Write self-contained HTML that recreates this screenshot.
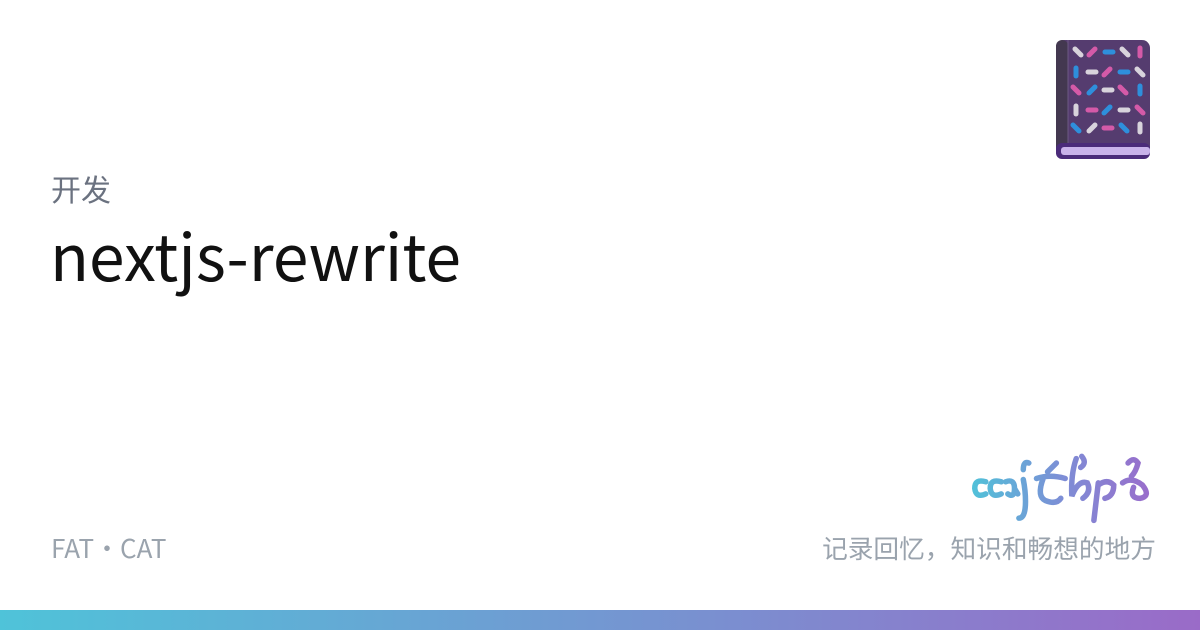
<!DOCTYPE html>
<html><head><meta charset="utf-8"><style>
body{margin:0;width:1200px;height:630px;background:#fff;position:relative;overflow:hidden;font-family:"Noto Sans CJK SC","Liberation Sans",sans-serif}
div{line-height:1}
.cat{position:absolute;left:51px;top:173px;font-size:30px;color:#6b7280}
.title{position:absolute;left:50px;top:222px;font-size:64px;color:#111}
.ft{position:absolute;left:51px;top:535px;font-size:26px;color:#9aa3ad}
.sl{position:absolute;right:44px;top:535px;font-size:25.7px;color:#9aa3ad}
.bar{position:absolute;left:0;top:610px;width:1200px;height:20px;background:linear-gradient(90deg,#4fc3d9,#7a8fd0 60%,#9a6bc8)}
</style></head><body>
<svg style="position:absolute;left:1056px;top:40px" width="94" height="120" viewBox="0 0 94 120">
<rect x="0" y="0" width="94" height="118" rx="8" fill="#553c6f"/>
<rect x="0" y="0" width="12" height="118" rx="6" fill="#433850"/>
<line x1="12" y1="0" x2="12" y2="104" stroke="#6d5a84" stroke-width="1"/>
<rect x="0" y="103" width="94" height="16" rx="6" fill="#4b2b7a"/>
<rect x="5" y="107" width="89" height="8" rx="3" fill="#c9b2ea"/>
<g stroke-width="5" stroke-linecap="round">
<line x1="19" y1="9" x2="25" y2="15" stroke="#d8d3dc"/><line x1="33" y1="15" x2="39" y2="9" stroke="#d45aa8"/><line x1="49" y1="12" x2="57" y2="12" stroke="#2e8fdc"/><line x1="66" y1="9" x2="72" y2="15" stroke="#d8d3dc"/><line x1="84" y1="8" x2="84" y2="16" stroke="#d45aa8"/>
<line x1="20" y1="28" x2="20" y2="36" stroke="#2e8fdc"/><line x1="32" y1="32" x2="40" y2="32" stroke="#d8d3dc"/><line x1="48" y1="35" x2="54" y2="29" stroke="#d45aa8"/><line x1="64" y1="32" x2="72" y2="32" stroke="#2e8fdc"/><line x1="81" y1="29" x2="87" y2="35" stroke="#d8d3dc"/>
<line x1="17" y1="47" x2="23" y2="53" stroke="#d45aa8"/><line x1="33" y1="53" x2="39" y2="47" stroke="#2e8fdc"/><line x1="48" y1="50" x2="56" y2="50" stroke="#d8d3dc"/><line x1="64" y1="47" x2="70" y2="53" stroke="#d45aa8"/><line x1="84" y1="46" x2="84" y2="54" stroke="#2e8fdc"/>
<line x1="20" y1="66" x2="20" y2="74" stroke="#d8d3dc"/><line x1="32" y1="70" x2="40" y2="70" stroke="#d45aa8"/><line x1="48" y1="73" x2="54" y2="67" stroke="#2e8fdc"/><line x1="64" y1="70" x2="72" y2="70" stroke="#d8d3dc"/><line x1="81" y1="67" x2="87" y2="73" stroke="#d45aa8"/>
<line x1="17" y1="85" x2="23" y2="91" stroke="#2e8fdc"/><line x1="33" y1="91" x2="39" y2="85" stroke="#d8d3dc"/><line x1="48" y1="88" x2="56" y2="88" stroke="#d45aa8"/><line x1="65" y1="85" x2="71" y2="91" stroke="#2e8fdc"/><line x1="84" y1="84" x2="84" y2="92" stroke="#d8d3dc"/>
</g></svg>
<div class="cat">开发</div>
<div class="title">nextjs-rewrite</div>
<svg style="position:absolute;left:968px;top:452px" width="190" height="75" viewBox="0 0 172 68">
<defs><linearGradient id="g" gradientUnits="userSpaceOnUse" x1="0" y1="0" x2="170" y2="0"><stop offset="0" stop-color="#4fc3d9"/><stop offset="0.5" stop-color="#7d8ed6"/><stop offset="1" stop-color="#9b6bcb"/></linearGradient></defs>
<g fill="none" stroke="url(#g)" stroke-width="5" stroke-linecap="round">
<path d="M16 27 Q6 24 6 33 Q7 42 16 38"/>
<path d="M30 27 Q20 24 20 33 Q21 42 30 38"/>
<path d="M34 27 Q42 24 42 33 Q42 42 36 38 M42 33 L45 38"/>
<path d="M50 25 Q52 35 52 45 Q52 60 46 60 M55 10 Q50 8 50 16"/>
<path d="M62 24 Q74 20 88 24 M68 24 Q62 40 70 44 Q80 48 84 42 M72 18 L80 10"/>
<path d="M98 6 Q93 20 94 40 Q100 25 108 28 Q112 36 104 42 M103 4 Q108 10 102 14"/>
<path d="M118 28 Q116 45 114 62 M118 30 Q126 24 132 30 Q132 40 124 42"/>
<path d="M140 28 Q148 22 158 30 Q166 40 156 42 Q146 42 150 32 M145 10 Q150 4 154 10 Q152 18 148 22"/>
</g></svg>
<div class="ft">FAT・CAT</div>
<div class="sl">记录回忆，知识和畅想的地方</div>
<div class="bar"></div>
</body></html>
